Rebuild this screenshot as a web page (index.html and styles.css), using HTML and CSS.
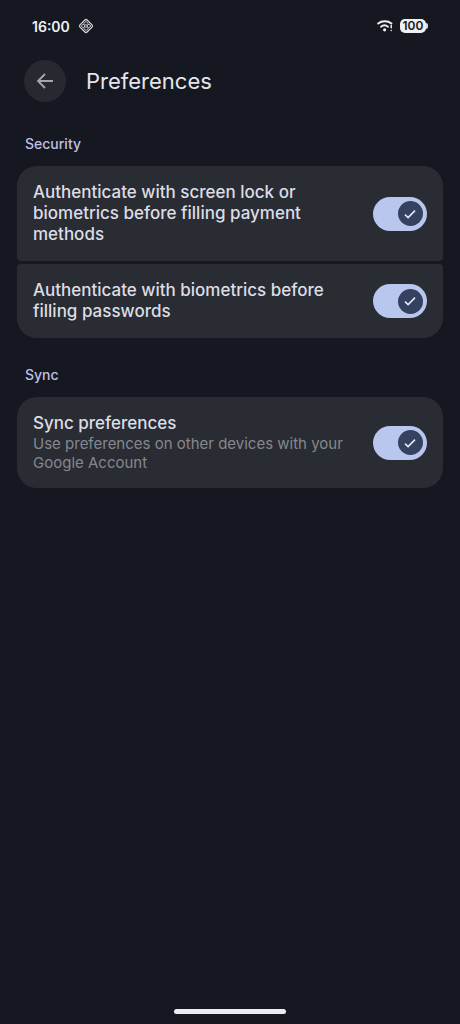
FILE: index.html
```html
<!DOCTYPE html>
<html lang="en">
<head>
<meta charset="utf-8">
<meta name="viewport" content="width=device-width, initial-scale=1">
<title>Preferences</title>
<link rel="stylesheet" href="styles.css">
</head>
<body>
<div class="screen">
  <div class="status">
    <time class="clock">16:00</time>
    <svg class="status-app" viewBox="0 0 16 16" width="16" height="16" fill="none" stroke="#d8dae0" aria-hidden="true">
      <rect x="3" y="3" width="10" height="10" rx="1.5" transform="rotate(45 8 8)" stroke-width="1.2"/>
      <path d="M8 3.4 10 5.4 8 7.4 6 5.4zM8 8.6l2 2-2 2-2-2zM5.2 6.1 7.1 8l-1.9 1.9L3.3 8zM10.8 6.1 12.7 8l-1.9 1.9L8.9 8z" stroke-width="1"/>
    </svg>
    <svg class="wifi" viewBox="0 0 16 14" width="16" height="14" fill="none" stroke="#f0f0f4" stroke-linecap="round" aria-hidden="true">
      <path d="M1.2 4.5C4.8 1.5 10.8 1.5 14.4 4.5" stroke-width="2"/>
      <path d="M4 7.7c2.2-1.8 4.8-1.8 7 0" stroke-width="1.9"/>
      <circle cx="7.6" cy="10.8" r="1.6" fill="#f0f0f4" stroke="none"/>
      <path d="M14.2 6.5v2.3M14.2 11.4v.1" stroke-width="1.5"/>
    </svg>
    <span class="battery"><span class="battery-level">100</span></span>
  </div>

  <header class="bar">
    <button class="back" type="button" aria-label="Back">
      <svg viewBox="0 0 18 18" width="18" height="18" fill="none" stroke="#a6a7ae" stroke-width="1.8" aria-hidden="true">
        <path d="M17 9H2.2M9 2 2 9l7 7"/>
      </svg>
    </button>
    <h1 class="title">Preferences</h1>
  </header>

  <main class="content">
    <section class="group">
      <h2 class="group-title">Security</h2>
      <div class="cards">
        <label class="card">
          <span class="text"><span class="name">Authenticate with screen lock or biometrics before filling payment methods</span></span>
          <span class="switch">
            <input class="switch-input" type="checkbox" role="switch" checked>
            <svg class="tick" viewBox="0 0 12 12" width="12" height="12" aria-hidden="true"><path d="M1 6.6 4.1 9.6 11 2.6"/></svg>
          </span>
        </label>
        <label class="card">
          <span class="text"><span class="name">Authenticate with biometrics before filling passwords</span></span>
          <span class="switch">
            <input class="switch-input" type="checkbox" role="switch" checked>
            <svg class="tick" viewBox="0 0 12 12" width="12" height="12" aria-hidden="true"><path d="M1 6.6 4.1 9.6 11 2.6"/></svg>
          </span>
        </label>
      </div>
    </section>

    <section class="group">
      <h2 class="group-title">Sync</h2>
      <div class="cards">
        <label class="card">
          <span class="text">
            <span class="name">Sync preferences</span>
            <span class="detail">Use preferences on other devices with your Google Account</span>
          </span>
          <span class="switch">
            <input class="switch-input" type="checkbox" role="switch" checked>
            <svg class="tick" viewBox="0 0 12 12" width="12" height="12" aria-hidden="true"><path d="M1 6.6 4.1 9.6 11 2.6"/></svg>
          </span>
        </label>
      </div>
    </section>
  </main>
  <div class="home-handle"></div>
</div>
</body>
</html>
```

FILE: styles.css
```css
* { box-sizing: border-box; }

body {
  margin: 0;
  background: #151820;
  color: #dcdde5;
  font-family: Inter, Roboto, sans-serif;
}

.screen {
  display: flex;
  flex-direction: column;
  min-height: 100vh;
}

.status {
  display: flex;
  align-items: center;
  height: 52px;
  padding: 0 32px;
}

.clock {
  font-size: 14px;
  font-weight: 600;
  color: #f0f0f4;
}

.status-app { margin-left: 8px; }

.wifi { margin-left: auto; }

.battery {
  display: flex;
  align-items: center;
  margin-left: 7px;
}

.battery::after {
  content: "";
  width: 2px;
  height: 6px;
  border-radius: 0 2px 2px 0;
  background: #d8dae0;
}

.battery-level {
  width: 26px;
  border-radius: 5px;
  background: #f0f0f4;
  color: #151820;
  font-size: 12px;
  font-weight: 600;
  line-height: 14px;
  text-align: center;
}

.bar {
  display: flex;
  align-items: center;
  gap: 20px;
  padding: 8px 24px;
}

.back {
  display: grid;
  place-items: center;
  width: 42px;
  height: 42px;
  padding: 0;
  border: 0;
  border-radius: 50%;
  background: #262930;
}

.title {
  margin: 0;
  font-size: 22px;
  font-weight: 400;
  line-height: 32px;
  color: #e6e7ed;
}

.content {
  flex: 1;
  padding: 24px 17px;
}

.group { margin-bottom: 27px; }

.group-title {
  margin: 0 0 12px;
  padding: 0 8px;
  font-size: 14px;
  font-weight: 500;
  line-height: 20px;
  color: #bfc0e2;
}

.cards {
  display: grid;
  gap: 3px;
}

.card {
  display: flex;
  align-items: center;
  justify-content: space-between;
  gap: 24px;
  padding: 16px;
  border-radius: 4px;
  background: #2a2c34;
}

.card:first-child {
  border-top-left-radius: 20px;
  border-top-right-radius: 20px;
}

.card:last-child {
  border-bottom-left-radius: 20px;
  border-bottom-right-radius: 20px;
}

.text {
  display: grid;
  max-width: 312px;
}

.name {
  font-size: 17px;
  font-weight: 500;
  line-height: 21px;
}

.detail {
  font-size: 15px;
  line-height: 19px;
  color: #85878e;
}

.switch {
  display: grid;
  flex: none;
  align-items: center;
}

.switch-input,
.tick { grid-area: 1 / 1; }

.switch-input {
  display: flex;
  align-items: center;
  appearance: none;
  width: 54px;
  height: 34px;
  margin: 0;
  padding: 0 4px;
  border-radius: 17px;
  background: #b9c6ee;
}

.switch-input::before {
  content: "";
  width: 25px;
  height: 25px;
  border-radius: 50%;
  background: #34415f;
}

.switch-input:checked { justify-content: flex-end; }

.tick {
  z-index: 1;
  justify-self: end;
  margin-right: 11px;
  fill: none;
  stroke: #e6ebfa;
  stroke-width: 1.5;
  pointer-events: none;
}

.switch-input:not(:checked) + .tick { visibility: hidden; }

.home-handle {
  align-self: center;
  width: 112px;
  height: 5px;
  margin-bottom: 10px;
  border-radius: 3px;
  background: #ececf0;
}
```
